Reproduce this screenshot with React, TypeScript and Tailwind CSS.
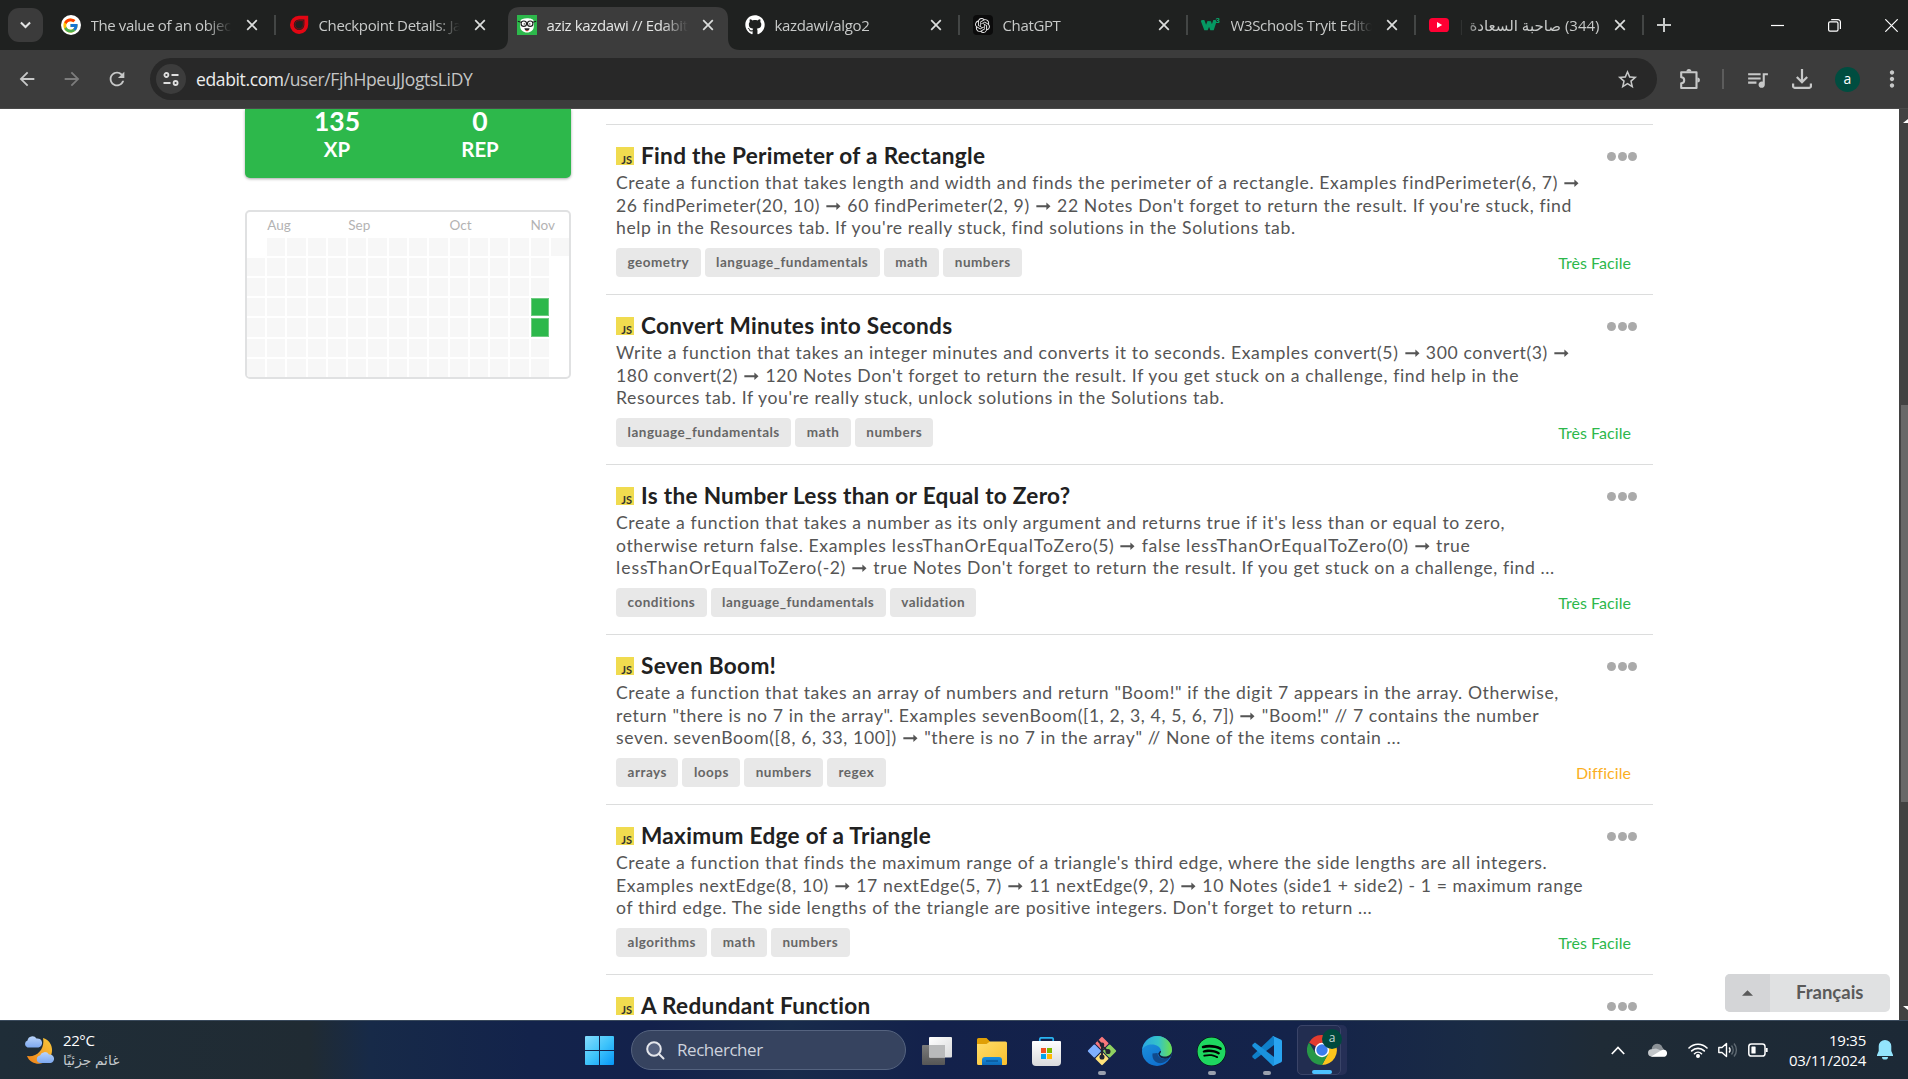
import type { ReactNode } from "react";
import { FcGoogle } from "react-icons/fc";
import { FaGithub, FaSpotify } from "react-icons/fa";
import { SiOpenai } from "react-icons/si";
import { MdArrowBack, MdArrowForward, MdRefresh, MdStarBorder, MdMoreVert, MdQueueMusic } from "react-icons/md";

function CloseX({ className = "" }: { className?: string }) {
  return (
    <svg viewBox="0 0 12 12" className={`h-3 w-3 shrink-0 ${className}`} fill="none" stroke="#dcdedd" strokeWidth="1.7">
      <path d="M1.2 1.2 10.8 10.8M10.8 1.2 1.2 10.8" />
    </svg>
  );
}

function CheckpointIcon() {
  return (
    <svg viewBox="0 0 20 20" className="h-5 w-5" fill="none">
      <path d="M10 2.6h7.3v7.2a7.2 7.2 0 1 1-7.3-7.2Z" fill="#1f2120" stroke="#e30613" strokeWidth="3.8" />
      <path d="M10.6 5.6h3.7v4.6a4.2 4.2 0 1 1-3.7-4.6Z" fill="#1f2120" stroke="#8f0710" strokeWidth="0.8" />
    </svg>
  );
}

function EdabitIcon() {
  return (
    <svg viewBox="0 0 20 20" className="h-5 w-5">
      <rect width="20" height="20" fill="#2db84b" />
      <path d="M3.2 6.5c.6-2.600 3.200-3.200 6.800-3.200s6.200.6 6.800 3.200v5c0 3.500-3 6-6.800 6s-6.800-2.500-6.800-6Z" fill="#fff" />
      <g fill="#fff" stroke="#1c1c1c" strokeWidth="1.1">
        <circle cx="6.8" cy="8.7" r="2.7" />
        <circle cx="13.2" cy="8.7" r="2.7" />
        <path d="M.8 6.2l3.400 1M19.200 6.200l-3.400 1M9.4 8h1.200" />
      </g>
      <circle cx="7.300" cy="8.900" r=".7" fill="#222" />
      <circle cx="12.800" cy="8.900" r=".7" fill="#222" />
      <path d="M7.400 13.200h5.200c-.4 2-1.400 2.700-2.600 2.700s-2.200-.7-2.600-2.700Z" fill="#222" />
      <path d="M8.400 15.200h3.200l-1.600 1.300Z" fill="#e5352d" />
    </svg>
  );
}

function W3Icon() {
  return (
    <div className="flex h-5 w-5 items-start text-[#04aa6d]">
      <svg viewBox="0 0 15 12" className="mt-[5px] h-3 w-[15px]" fill="none" stroke="#059862" strokeWidth="3.6" strokeLinejoin="bevel">
        <path d="M1.4 0 5 9.6 8.2 1.8 11 9.6 14.2 0" />
      </svg>
      <span className="mt-[2px] font-['Liberation_Sans'] text-[8px] leading-none font-bold">3</span>
    </div>
  );
}

function YoutubeIcon() {
  return (
    <svg viewBox="0 0 20 20" className="h-5 w-5">
      <rect y="3" width="20" height="14" rx="3.6" fill="#ff0033" />
      <path d="M8 7v6l5.2-3Z" fill="#fff" />
    </svg>
  );
}

type Tab = { title: string; icon: ReactNode; active?: boolean; rtl?: boolean; separator?: boolean };

const tabs: Tab[] = [
  { title: "The value of an objec", icon: <span className="flex h-5 w-5 items-center justify-center rounded-full bg-white"><FcGoogle size={17} /></span>, separator: true },
  { title: "Checkpoint Details: Ja", icon: <CheckpointIcon /> },
  { title: "aziz kazdawi // Edabit", icon: <EdabitIcon />, active: true },
  { title: "kazdawi/algo2", icon: <FaGithub size={20} color="#fff" />, separator: true },
  { title: "ChatGPT", icon: <span className="flex h-5 w-5 items-center justify-center rounded-[4px] bg-[#0b0b0b]"><SiOpenai size={15} color="#e8e8e8" /></span>, separator: true },
  { title: "W3Schools Tryit Edito", icon: <W3Icon />, separator: true },
  { title: "(344) صاحبة السعادة |", icon: <YoutubeIcon />, rtl: true, separator: true },
];

function BrowserTab({ tab }: { tab: Tab }) {
  const fade = tab.rtl
    ? "[mask-image:linear-gradient(to_left,#000_85%,transparent)]"
    : "[mask-image:linear-gradient(to_right,#000_82%,transparent)]";
  return (
    <div className="relative flex h-[50px] w-[228px] shrink-0 items-center pl-[15px]">
      {tab.active && (
        <div className="absolute top-[7px] -left-[6px] h-[43px] w-[244px]">
          <svg viewBox="0 0 244 43" className="h-full w-full" fill="#3c3c3c">
            <path d="M0 43C8 43 12 39 12 31V12C12 4 16 0 24 0H220C228 0 232 4 232 12V31C232 39 236 43 244 43Z" />
          </svg>
        </div>
      )}
      <span className="relative flex h-5 w-5 shrink-0 items-center justify-center">{tab.icon}</span>
      <span
        dir={tab.rtl ? "rtl" : "ltr"}
        className={`relative -mt-px ml-[10px] w-[141px] shrink-0 text-[15px] leading-6 tracking-[-0.36px] whitespace-nowrap ${tab.active ? "text-[#e4e5e4]" : "text-[#c8cac9]"} ${fade}`}
      >
        {tab.title}
      </span>
      <CloseX className="relative ml-[14px]" />
      {tab.separator && <span className="-mr-[2px] ml-auto h-5 w-[2px] bg-[#434645]" />}
    </div>
  );
}

function TabStrip() {
  return (
    <div className="flex h-[50px] bg-[#1f2120]">
      <div className="mt-2 ml-2 flex h-[34px] w-[35px] shrink-0 items-center justify-center rounded-[11px] bg-[#3b3b3b]">
        <svg viewBox="0 0 12 8" className="h-[8px] w-[11px]" fill="none" stroke="#e2e3e3" strokeWidth="2.2">
          <path d="M1 1.2 6 6.2 11 1.2" />
        </svg>
      </div>
      <div className="ml-[2.500px] flex">
        {tabs.map((t) => (
          <BrowserTab key={t.title} tab={t} />
        ))}
      </div>
      <svg viewBox="0 0 14 14" className="mt-[18px] ml-[15px] h-[14px] w-[14px]" stroke="#c8cac9" strokeWidth="2">
        <path d="M7 0V14M0 7H14" />
      </svg>
      <div className="mr-[10px] ml-auto flex h-[50px] items-center gap-[44px]">
        <svg viewBox="0 0 13 13" className="h-[13px] w-[13px]" stroke="#fff" strokeWidth="1.2"><path d="M0 6.5H13" /></svg>
        <svg viewBox="0 0 13 13" className="h-[13px] w-[13px]" fill="none" stroke="#fff" strokeWidth="1.2">
          <rect x=".6" y="2.8" width="9.4" height="9.4" rx="1.4" />
          <path d="M3.2.7H10a2.4 2.4 0 0 1 2.4 2.4V10" />
        </svg>
        <svg viewBox="0 0 13 13" className="h-[13px] w-[13px]" stroke="#fff" strokeWidth="1.2"><path d="M.3.3 12.7 12.7M12.7.3.3 12.7" /></svg>
      </div>
    </div>
  );
}

function ExtensionIcon() {
  return (
    <svg viewBox="0 0 22 22" className="ml-[22px] h-[22px] w-[22px] shrink-0" fill="none" stroke="#c7c8c8" strokeWidth="2.1" strokeLinejoin="round">
      <path d="M2.200 4.200H17.500V20H2.200V15.200A2.800 2.800 0 0 0 2.200 9.200Z" />
      <path d="M7.400 3.600A2.500 2.500 0 0 1 12.400 3.600ZM18.400 9.600A2.500 2.500 0 0 1 18.400 14.600Z" fill="#c7c8c8" stroke="none" />
    </svg>
  );
}

function Toolbar() {
  return (
    <div className="flex h-[59px] items-center border-b border-[#4a4a4a] bg-[#3c3c3c] text-[#c7c8c8]">
      <MdArrowBack size={22} className="ml-[16px] shrink-0" />
      <MdArrowForward size={22} className="ml-[23px] shrink-0 text-[#7c7c7c]" />
      <MdRefresh size={22} className="ml-[23px] shrink-0" />
      <div className="ml-[22px] flex h-[42px] w-[1507px] shrink-0 items-center rounded-full bg-[#282828]">
        <div className="ml-[6px] flex h-[30px] w-[30px] items-center justify-center rounded-full bg-[#3c3c3c]">
          <svg viewBox="0 0 16 16" className="h-4 w-4" fill="none" stroke="#dedede" strokeWidth="1.8">
            <circle cx="3.4" cy="4" r="2" />
            <path d="M8.5 4H15.5M.5 12H7.5" />
            <circle cx="12.6" cy="12" r="2" />
          </svg>
        </div>
        <div className="ml-[10px] text-[17.5px] leading-6 tracking-[-0.37px] text-[#c5c6c6]">
          <span className="text-[#ececec]">edabit.com</span>/user/FjhHpeuJJogtsLiDY
        </div>
        <MdStarBorder size={23} className="mr-[18px] ml-auto" />
      </div>
      <ExtensionIcon />
      <span className="ml-[21px] h-5 w-[2px] bg-[#5c5c5c]" />
      <MdQueueMusic size={25} className="ml-[21px] shrink-0" />
      <svg viewBox="0 0 20 20" className="ml-[22px] h-5 w-5 shrink-0" fill="none" stroke="#c7c8c8" strokeWidth="2.2">
        <path d="M10 0V13M4.8 8 10 13.2 15.2 8M1.1 14.5V17.2a1.5 1.5 0 0 0 1.500 1.600H17.4a1.5 1.5 0 0 0 1.500-1.600V14.5" />
      </svg>
      <span className="ml-[23px] flex h-[25px] w-[25px] shrink-0 items-center justify-center rounded-full bg-[#004d40] pb-[2px] text-[14px] text-white">a</span>
      <MdMoreVert size={26} className="ml-[19px] shrink-0" />
    </div>
  );
}

const months: [string, string][] = [
  ["Aug", "col-start-2"],
  ["Sep", "col-start-6"],
  ["Oct", "col-start-11"],
  ["Nov", "col-start-15"],
];

function Calendar() {
  const cells = [];
  for (let row = 0; row < 7; row++) {
    for (let col = 0; col < 16; col++) {
      const empty = (col === 0 && row === 0) || (col === 15 && row > 0);
      const done = col === 14 && (row === 3 || row === 4);
      cells.push(
        <div key={`${row}-${col}`} className={empty ? "" : done ? "border border-[#6fcb81] bg-[#2db84b]" : "bg-[#f7f7f7]"} />,
      );
    }
  }
  return (
    <div className="mt-8 h-[169px] w-[326px] overflow-hidden rounded-[5px] border-2 border-[#e0e1e2]">
      <div className="grid h-[25.6px] grid-cols-16 gap-x-[2px] pt-[4px] text-[13.5px] leading-[18px] text-[#b3b3b3]">
        {months.map(([m, col]) => (
          <span key={m} className={`row-start-1 w-0 ${col}`}>{m}</span>
        ))}
      </div>
      <div className="-mr-[0.4px] -ml-[0.4px] grid auto-rows-[18.2px] grid-cols-16 gap-[2px]">{cells}</div>
    </div>
  );
}

function Sidebar() {
  return (
    <div className="ml-[245px] w-[326px] shrink-0">
      <div className="flex h-[69px] justify-center rounded-b-[5px] bg-[#2db84b] pl-[2px] text-center font-bold text-white shadow-[0_1px_3px_rgba(0,0,0,0.35)]">
        {[["135", "XP"], ["0", "REP"]].map(([n, l], i) => (
          <div key={l} className={i ? "w-[144px]" : "w-[142px]"}>
            <div className="-mt-[3px] text-[26.500px] leading-[30px]">{n}</div>
            <div className="text-[20.4px] leading-[26px]">{l}</div>
          </div>
        ))}
      </div>
      <Calendar />
    </div>
  );
}

type Challenge = { title: string; lines: string[]; tags: string[]; level: string; hard?: boolean };

const challenges: Challenge[] = [
  {
    title: "Find the Perimeter of a Rectangle",
    lines: [
      "Create a function that takes length and width and finds the perimeter of a rectangle. Examples findPerimeter(6, 7) ➞",
      "26 findPerimeter(20, 10) ➞ 60 findPerimeter(2, 9) ➞ 22 Notes Don't forget to return the result. If you're stuck, find",
      "help in the Resources tab. If you're really stuck, find solutions in the Solutions tab.",
    ],
    tags: ["geometry", "language_fundamentals", "math", "numbers"],
    level: "Très Facile",
  },
  {
    title: "Convert Minutes into Seconds",
    lines: [
      "Write a function that takes an integer minutes and converts it to seconds. Examples convert(5) ➞ 300 convert(3) ➞",
      "180 convert(2) ➞ 120 Notes Don't forget to return the result. If you get stuck on a challenge, find help in the",
      "Resources tab. If you're really stuck, unlock solutions in the Solutions tab.",
    ],
    tags: ["language_fundamentals", "math", "numbers"],
    level: "Très Facile",
  },
  {
    title: "Is the Number Less than or Equal to Zero?",
    lines: [
      "Create a function that takes a number as its only argument and returns true if it's less than or equal to zero,",
      "otherwise return false. Examples lessThanOrEqualToZero(5) ➞ false lessThanOrEqualToZero(0) ➞ true",
      "lessThanOrEqualToZero(-2) ➞ true Notes Don't forget to return the result. If you get stuck on a challenge, find ...",
    ],
    tags: ["conditions", "language_fundamentals", "validation"],
    level: "Très Facile",
  },
  {
    title: "Seven Boom!",
    lines: [
      'Create a function that takes an array of numbers and return "Boom!" if the digit 7 appears in the array. Otherwise,',
      'return "there is no 7 in the array". Examples sevenBoom([1, 2, 3, 4, 5, 6, 7]) ➞ "Boom!" // 7 contains the number',
      'seven. sevenBoom([8, 6, 33, 100]) ➞ "there is no 7 in the array" // None of the items contain ...',
    ],
    tags: ["arrays", "loops", "numbers", "regex"],
    level: "Difficile",
    hard: true,
  },
  {
    title: "Maximum Edge of a Triangle",
    lines: [
      "Create a function that finds the maximum range of a triangle's third edge, where the side lengths are all integers.",
      "Examples nextEdge(8, 10) ➞ 17 nextEdge(5, 7) ➞ 11 nextEdge(9, 2) ➞ 10 Notes (side1 + side2) - 1 = maximum range",
      "of third edge. The side lengths of the triangle are positive integers. Don't forget to return ...",
    ],
    tags: ["algorithms", "math", "numbers"],
    level: "Très Facile",
  },
  { title: "A Redundant Function", lines: [], tags: [], level: "" },
];

function Line({ text }: { text: string }) {
  return (
    <p>
      {text.split(/(➞|lessThanOrEqualToZero)/).map((part, i) => {
        if (part === "➞") return <span key={i} className="mx-[0.9px] inline-block scale-x-110 leading-none">➞</span>;
        if (part === "lessThanOrEqualToZero") return <span key={i} className="tracking-[0.98px]">{part}</span>;
        return part;
      })}
    </p>
  );
}

function ChallengeRow({ c }: { c: Challenge }) {
  return (
    <div className="h-[170px] shrink-0 border-t border-[#dcdddd] px-[10px] pt-[17px]">
      <div className="flex h-[28px] items-center">
        <span className="flex h-[18px] w-[18px] items-end justify-end bg-[#f0db4f] pr-[2px] text-[11px] leading-[11px] font-bold text-[#323330]">JS</span>
        <h3 className="ml-[7px] text-[22.6px] leading-[28px] font-bold tracking-[0.3px] text-[#212121]">{c.title}</h3>
        <span className="mr-[6px] ml-auto flex gap-[1.5px]">
          <i className="h-[9px] w-[9px] rounded-full bg-[#aaaaaa]" />
          <i className="h-[9px] w-[9px] rounded-full bg-[#aaaaaa]" />
          <i className="h-[9px] w-[9px] rounded-full bg-[#aaaaaa]" />
        </span>
      </div>
      <div className="mt-[2px] text-[17.6px] leading-[22.6px] tracking-[0.615px] whitespace-nowrap text-[#555]">
        {c.lines.map((l) => (
          <Line key={l} text={l} />
        ))}
      </div>
      <div className="mt-2 flex gap-1">
        {c.tags.map((t) => (
          <span key={t} className="h-[29px] rounded-[4px] bg-[#e8e8e8] pr-[11.300px] pl-[11.600px] text-[13.5px] leading-[29px] font-bold tracking-[0.5px] text-[#666]">{t}</span>
        ))}
        <span className={`mr-3 ml-auto pt-[3.5px] text-[16px] leading-6 tracking-[0.05px] ${c.hard ? "text-[#fbaf1f]" : "text-[#2db84b]"}`}>{c.level}</span>
      </div>
    </div>
  );
}

function Scrollbar() {
  return (
    <div className="ml-auto flex h-full w-[9px] shrink-0 flex-col overflow-hidden bg-[#424242] pl-[2px]">
      <svg viewBox="0 0 7 4" className="mt-[10px] ml-[2px] h-1 w-[7px]" fill="#fff"><path d="M0 4 5 0 7 1V4Z" /></svg>
      <div className="mt-[282px] h-[397px] w-full bg-[#686868]" />
      <svg viewBox="0 0 7 4" className="mt-auto mb-[10px] ml-[2px] h-1 w-[7px]" fill="#fff"><path d="M0 0H7V3L5 4Z" /></svg>
    </div>
  );
}

function Page() {
  return (
    <main className="relative flex h-[911px] overflow-hidden bg-white font-['Lato','DejaVu_Sans',sans-serif]">
      <Sidebar />
      <div className="mt-[15px] ml-[35px] flex w-[1047px] shrink-0 flex-col">
        {challenges.map((c) => (
          <ChallengeRow key={c.title} c={c} />
        ))}
      </div>
      <Scrollbar />
      <div className="absolute right-[18px] bottom-[8px] flex h-[38px] w-[165px] overflow-hidden rounded-[5px] bg-[#e0e1e2]">
        <span className="flex w-[45px] items-center justify-center bg-[#d4d5d7]">
          <svg viewBox="0 0 12 6" className="h-[6px] w-[11px]" fill="#5a5a5a"><path d="M0 6 6 0 12 6Z" /></svg>
        </span>
        <span className="flex-1 pl-[26px] text-[18.5px] leading-[36px] font-bold text-[#5a5a5a]">Français</span>
      </div>
    </main>
  );
}

function WindowsIcon() {
  return (
    <svg viewBox="0 0 29 29" className="h-[29px] w-[29px]">
      <defs>
        <linearGradient id="win" x1="0" y1="0" x2="1" y2="1" gradientUnits="objectBoundingBox">
          <stop offset="0" stopColor="#85dcfd" />
          <stop offset=".5" stopColor="#3fc4fb" />
          <stop offset="1" stopColor="#0696f7" />
        </linearGradient>
      </defs>
      <path fill="url(#win)" d="M1 0H14V14H0V1A1 1 0 0 1 1 0ZM15 0H28A1 1 0 0 1 29 1V14H15ZM0 15H14V29H1A1 1 0 0 1 0 28ZM15 15H29V28A1 1 0 0 1 28 29H15Z" />
    </svg>
  );
}

function TaskViewIcon() {
  return (
    <svg viewBox="0 0 30 28" className="h-7 w-[30px]">
      <defs>
        <linearGradient id="tvf" x1="0" y1="0" x2="1" y2="1"><stop offset="0" stopColor="#fff" /><stop offset="1" stopColor="#d9dadb" /></linearGradient>
        <linearGradient id="tvb" x1="0" y1="0" x2="0" y2="1"><stop offset="0" stopColor="#7b7b7b" /><stop offset="1" stopColor="#565656" /></linearGradient>
      </defs>
      <rect y="8" width="23" height="20" rx="1" fill="url(#tvb)" />
      <rect x="7" width="23" height="20.5" rx="1" fill="url(#tvf)" />
      <path d="M7 8H23V20.5H8A1 1 0 0 1 7 19.5Z" fill="#b9babb" />
    </svg>
  );
}

function FolderIcon() {
  return (
    <svg viewBox="0 0 30 27" className="h-[27px] w-[30px]">
      <defs>
        <linearGradient id="fo" x1="0" y1="0" x2="1" y2="1"><stop offset="0" stopColor="#ffdd6b" /><stop offset="1" stopColor="#fbc02d" /></linearGradient>
        <linearGradient id="fb" x1="0" y1="0" x2="0" y2="1"><stop offset="0" stopColor="#1a8fe0" /><stop offset="1" stopColor="#0c6ab8" /></linearGradient>
      </defs>
      <path d="M0 1.5A1.5 1.5 0 0 1 1.500 0H9.500L13 3.500V8H0Z" fill="#e09f06" />
      <path d="M0 6H9.500L13 3.500H28.500A1.500 1.500 0 0 1 30 5V25.500A1.500 1.500 0 0 1 28.500 27H1.500A1.500 1.500 0 0 1 0 25.500Z" fill="url(#fo)" />
      <path d="M5 27V22A3 3 0 0 1 8 19H22A3 3 0 0 1 25 22V27Z" fill="url(#fb)" />
      <path d="M9 23H21" stroke="#0a4f8e" strokeWidth="1.2" />
    </svg>
  );
}

function StoreIcon() {
  return (
    <svg viewBox="0 0 29 29" className="h-[29px] w-[29px]">
      <defs><linearGradient id="st" x1="0" y1="0" x2="0" y2="1"><stop offset="0" stopColor="#fff" /><stop offset="1" stopColor="#d9dadc" /></linearGradient></defs>
      <path d="M7.800 5V2.200A1.400 1.400 0 0 1 9.200.800H19.800A1.400 1.400 0 0 1 21.200 2.200V5" fill="none" stroke="#29b4f1" strokeWidth="1.700" />
      <path d="M0 5A1 1 0 0 1 1 4H28A1 1 0 0 1 29 5V25A4 4 0 0 1 25 29H4A4 4 0 0 1 0 25Z" fill="url(#st)" />
      <path d="M9 11H14V16H9Z" fill="#f25022" />
      <path d="M15 11H20V16H15Z" fill="#7fba00" />
      <path d="M9 17H14V22H9Z" fill="#00a4ef" />
      <path d="M15 17H20V22H15Z" fill="#ffb900" />
    </svg>
  );
}

function GitIcon() {
  return (
    <svg viewBox="0 0 30 30" className="h-[30px] w-[30px]">
      <g transform="rotate(45 15 15)">
        <rect x="4.700" y="4.700" width="9.800" height="9.800" rx="1" fill="#f8777b" />
        <rect x="4.700" y="15.500" width="9.800" height="9.800" rx="1" fill="#7fb0ff" />
        <rect x="15.500" y="4.700" width="9.800" height="9.800" rx="1" fill="#8fd160" />
        <rect x="15.500" y="15.500" width="9.800" height="9.800" rx="1" fill="#ffe27a" />
      </g>
      <g fill="none" stroke="#222433" strokeWidth="1.900">
        <path d="M11 4.500 15 9V21M15 10 21 15.500" />
        <circle cx="15" cy="8.800" r="1.400" fill="#222433" />
        <circle cx="21" cy="15.500" r="1.600" fill="#222433" />
        <circle cx="15" cy="21" r="1.600" fill="#222433" />
      </g>
    </svg>
  );
}

function EdgeIcon() {
  return (
    <svg viewBox="0 0 30 30" className="h-[30px] w-[30px]">
      <defs>
        <linearGradient id="eg1" x1="0" y1=".3" x2="1" y2=".3"><stop offset="0" stopColor="#2aa6e0" /><stop offset=".55" stopColor="#35c4c8" /><stop offset="1" stopColor="#6ee04a" /></linearGradient>
        <linearGradient id="eg2" x1="0" y1="0" x2=".6" y2="1"><stop offset="0" stopColor="#1e98dd" /><stop offset="1" stopColor="#0f6fd0" /></linearGradient>
      </defs>
      <circle cx="15" cy="15" r="15" fill="url(#eg2)" />
      <path d="M10.500 17.500C9.500 24.500 15.500 28.500 21 26.700 24 25.800 26.500 23.500 27.600 21.600 24 24 16 23.500 15.500 17Z" fill="#114a8b" />
      <path d="M28.500 20.800C25 23.800 17 23.500 16.300 17.500L18 15 30 16.500C29.800 18 29.300 19.600 28.500 20.800Z" fill="#14213f" />
      <path d="M.200 13.500C1.500 5.500 8 0 15.300 0 23.500 0 30 6.500 30 13.700 30 18 26.800 20.500 23 20.500 19.500 20.500 17.500 19 18 17.800 18.800 16.800 19.200 15.800 19 14.600 18.500 11 14.500 8.500 10 8.500 5.500 8.500 1.800 10.500.200 13.500Z" fill="url(#eg1)" />
    </svg>
  );
}

function VsCodeIcon() {
  return (
    <svg viewBox="0 0 30 30" className="h-[30px] w-[30px]">
      <path d="M22 9 3 23.500 .300 21.300V19.800L20.500.500 22 0Z" fill="#0f7fc9" />
      <path d="M22 21 3 6.500.300 8.700V10.200L20.500 29.500 22 30Z" fill="#1a92dc" />
      <path d="M21.500.200 28.700 3.600C29.500 4 30 4.700 30 5.600V24.400C30 25.300 29.500 26 28.700 26.400L21.500 29.800C20.700 30 20.500 29.800 20.300 29.400 21.500 30 22 29 22 28V2C22 1 21.500 0 20.300.600 20.500.200 20.700 0 21.500.200Z" fill="#29a4f0" />
    </svg>
  );
}

function ChromeIcon() {
  return (
    <svg viewBox="0 0 30 30" className="h-[30px] w-[30px]">
      <path d="M15 15 2 7.500A15 15 0 0 1 28 7.500H15Z" fill="#e33b2e" />
      <path d="M15 8H28.200A15 15 0 0 1 15 30L21.200 18.500Z" fill="#fdc41c" />
      <path d="M2 7.500A15 15 0 0 0 15 30L21.300 18.700 8.700 18.500Z" fill="#279847" />
      <circle cx="15" cy="15" r="7.200" fill="#fff" />
      <circle cx="15" cy="15" r="5.700" fill="#3b7ded" />
    </svg>
  );
}

function TaskButton({ children, running }: { children: ReactNode; running?: boolean }) {
  return (
    <div className="flex h-full w-[55px] shrink-0 flex-col items-center">
      <div className="mt-[15px] flex h-[30px] items-center">{children}</div>
      {running && <span className="mt-[5px] h-1 w-2 rounded-full bg-[#9aa0ae]" />}
    </div>
  );
}

function Weather() {
  return (
    <div className="ml-[24px] flex w-[101px] shrink-0 items-center">
      <svg viewBox="0 0 30 30" className="h-[30px] w-[30px] shrink-0">
        <defs>
          <linearGradient id="mn" x1="1" y1="0" x2="0" y2="1"><stop offset="0" stopColor="#f8c93c" /><stop offset="1" stopColor="#f08016" /></linearGradient>
          <linearGradient id="cl" x1="0" y1="0" x2="0" y2="1"><stop offset="0" stopColor="#b9d4fb" /><stop offset="1" stopColor="#7da8ef" /></linearGradient>
        </defs>
        <path d="M19 3C26 5 29.500 12 27.500 19 25 28 15 31 8 27 5.500 25.500 4 23.500 3 21 14 22.500 21 13 19 3Z" fill="url(#mn)" />
        <path d="M3.500 12.500A3.700 3.700 0 0 1 3.500 5.500 5 5 0 0 1 12.500 3.500 4.600 4.600 0 0 1 14.500 12.500Z" fill="url(#cl)" />
        <path d="M16 28A3.800 3.800 0 0 1 16 20.500 5 5 0 0 1 25 19.500 4.300 4.300 0 0 1 26.500 28Z" fill="url(#cl)" />
      </svg>
      <div className="-mt-px ml-[9px] flex flex-col items-start text-[15px] leading-5 tracking-[-0.4px] whitespace-nowrap text-white">
        <span>22°C</span>
        <span className="text-[13.8px] text-[#c3c8cc]" dir="rtl">غائم جزئيًا</span>
      </div>
    </div>
  );
}

function Tray() {
  return (
    <div className="mr-[15px] ml-auto flex items-center">
      <svg viewBox="0 0 14 9" className="h-[9px] w-[14px]" fill="none" stroke="#fff" strokeWidth="1.700"><path d="M.800 8 7 1.500 13.200 8" /></svg>
      <svg viewBox="0 0 20 14" className="ml-[23px] h-[14px] w-5">
        <path d="M4 8A5.500 5.500 0 0 1 14.500 4.500L17 8Z" fill="#8b9196" />
        <path d="M3.800 13.500A3.600 3.600 0 0 1 3.500 6.300L8 5.500 17 9 18 13Z" fill="#c3c7ca" />
        <path d="M2.800 13.800 13 7.600A4.500 4.500 0 0 1 16 6.800 3.600 3.600 0 0 1 16.500 13.800Z" fill="#fff" />
      </svg>
      <svg viewBox="0 0 20 16" className="ml-5 h-4 w-5" fill="none" stroke="#fff" strokeWidth="1.600" strokeLinecap="round">
        <path d="M1 6A12.600 12.600 0 0 1 19 6M3.700 8.900A9 9 0 0 1 16.300 8.900M6.500 11.700A5 5 0 0 1 13.500 11.700" />
        <circle cx="10" cy="14" r="1.200" fill="#fff" />
      </svg>
      <svg viewBox="0 0 20 16" className="ml-[10px] h-4 w-5" fill="none" stroke="#fff" strokeWidth="1.400" strokeLinejoin="round">
        <path d="M.800 5.500H4L8.500 1.500V14.500L4 10.500H.800Z" />
        <path d="M11 5.500A3.500 3.500 0 0 1 11 10.500" />
        <path d="M13.500 3.500A7 7 0 0 1 13.500 12.500M16 1.500A10 10 0 0 1 16 14.500" stroke="#5f6a73" />
      </svg>
      <svg viewBox="0 0 20 14" className="ml-[10px] h-[14px] w-5" fill="none" stroke="#fff" strokeWidth="1.500">
        <rect x=".800" y=".900" width="16.200" height="12.200" rx="2.600" />
        <rect x="3.400" y="3.500" width="4.200" height="7" rx=".6" fill="#fff" stroke="none" />
        <path d="M18.700 5V9" strokeWidth="1.900" />
      </svg>
      <div className="-mt-px ml-[21px] text-right text-[15px] leading-5 tracking-[-0.25px] text-white">
        <div>19:35</div>
        <div>03/11/2024</div>
      </div>
      <svg viewBox="0 0 16 20" className="ml-[11px] h-5 w-4" fill="#93e4fc">
        <path d="M8 0A6.300 6.300 0 0 1 14.300 6.300V11L16 15V16H0V15L1.700 11V6.300A6.300 6.300 0 0 1 8 0ZM5 17H11A3 2.600 0 0 1 5 17Z" />
      </svg>
    </div>
  );
}

function Taskbar() {
  return (
    <footer className="flex h-[59px] items-center border-t border-[#3a4a5c] bg-[linear-gradient(90deg,#1f2d38_0,#202b33_310px,#172a48_370px,#13234b_530px,#13214b_650px,#182b4b_790px,#13214b_930px,#14234a_1300px,#1a2b44_1480px,#1f2b36_1600px,#1c2936_100%)]">
      <Weather />
      <div className="ml-[460px] flex h-full items-center">
        <WindowsIcon />
        <div className="ml-[17px] flex h-10 w-[275px] items-center rounded-full border border-[#55637f] bg-[#36435f] text-[17px] tracking-[-0.45px] text-[#cdd2dd]">
          <svg viewBox="0 0 19 19" className="ml-[14px] h-[19px] w-[19px]" fill="#56627f" stroke="#e4e6eb" strokeWidth="2" strokeLinecap="round">
            <circle cx="8" cy="8" r="6.800" />
            <path d="M13 13 17.500 17.500" />
          </svg>
          <span className="ml-[12px] leading-6">Rechercher</span>
        </div>
        <div className="ml-[3px] flex h-full">
          <TaskButton><TaskViewIcon /></TaskButton>
          <TaskButton><FolderIcon /></TaskButton>
          <TaskButton><StoreIcon /></TaskButton>
          <TaskButton running><GitIcon /></TaskButton>
          <TaskButton><EdgeIcon /></TaskButton>
          <TaskButton running><span className="rounded-full bg-black"><FaSpotify size={29} color="#1ed760" /></span></TaskButton>
          <TaskButton running><VsCodeIcon /></TaskButton>
          <div className="relative mt-1 ml-[3px] h-[50px] w-[50px] rounded-[5px] bg-[#252f56]">
            <div className="h-full w-[44px] rounded-[5px] border border-[#3a4468] bg-[#222d50]" />
            <div className="absolute top-[10px] left-[10px]"><ChromeIcon /></div>
            <span className="absolute top-[4px] left-[25px] flex h-5 w-5 items-center justify-center rounded-full bg-[#00493d] pb-[2px] text-[12px] leading-none text-[#c9dbd8]">a</span>
            <span className="absolute bottom-[1px] left-[15px] h-1 w-5 rounded-full bg-[#4cc2ff]" />
          </div>
        </div>
      </div>
      <Tray />
    </footer>
  );
}

export default function App() {
  return (
    <div className="flex h-[1079px] w-[1908px] flex-col overflow-hidden font-['Open_Sans','Noto_Sans','DejaVu_Sans',sans-serif]">
      <TabStrip />
      <Toolbar />
      <Page />
      <Taskbar />
    </div>
  );
}
